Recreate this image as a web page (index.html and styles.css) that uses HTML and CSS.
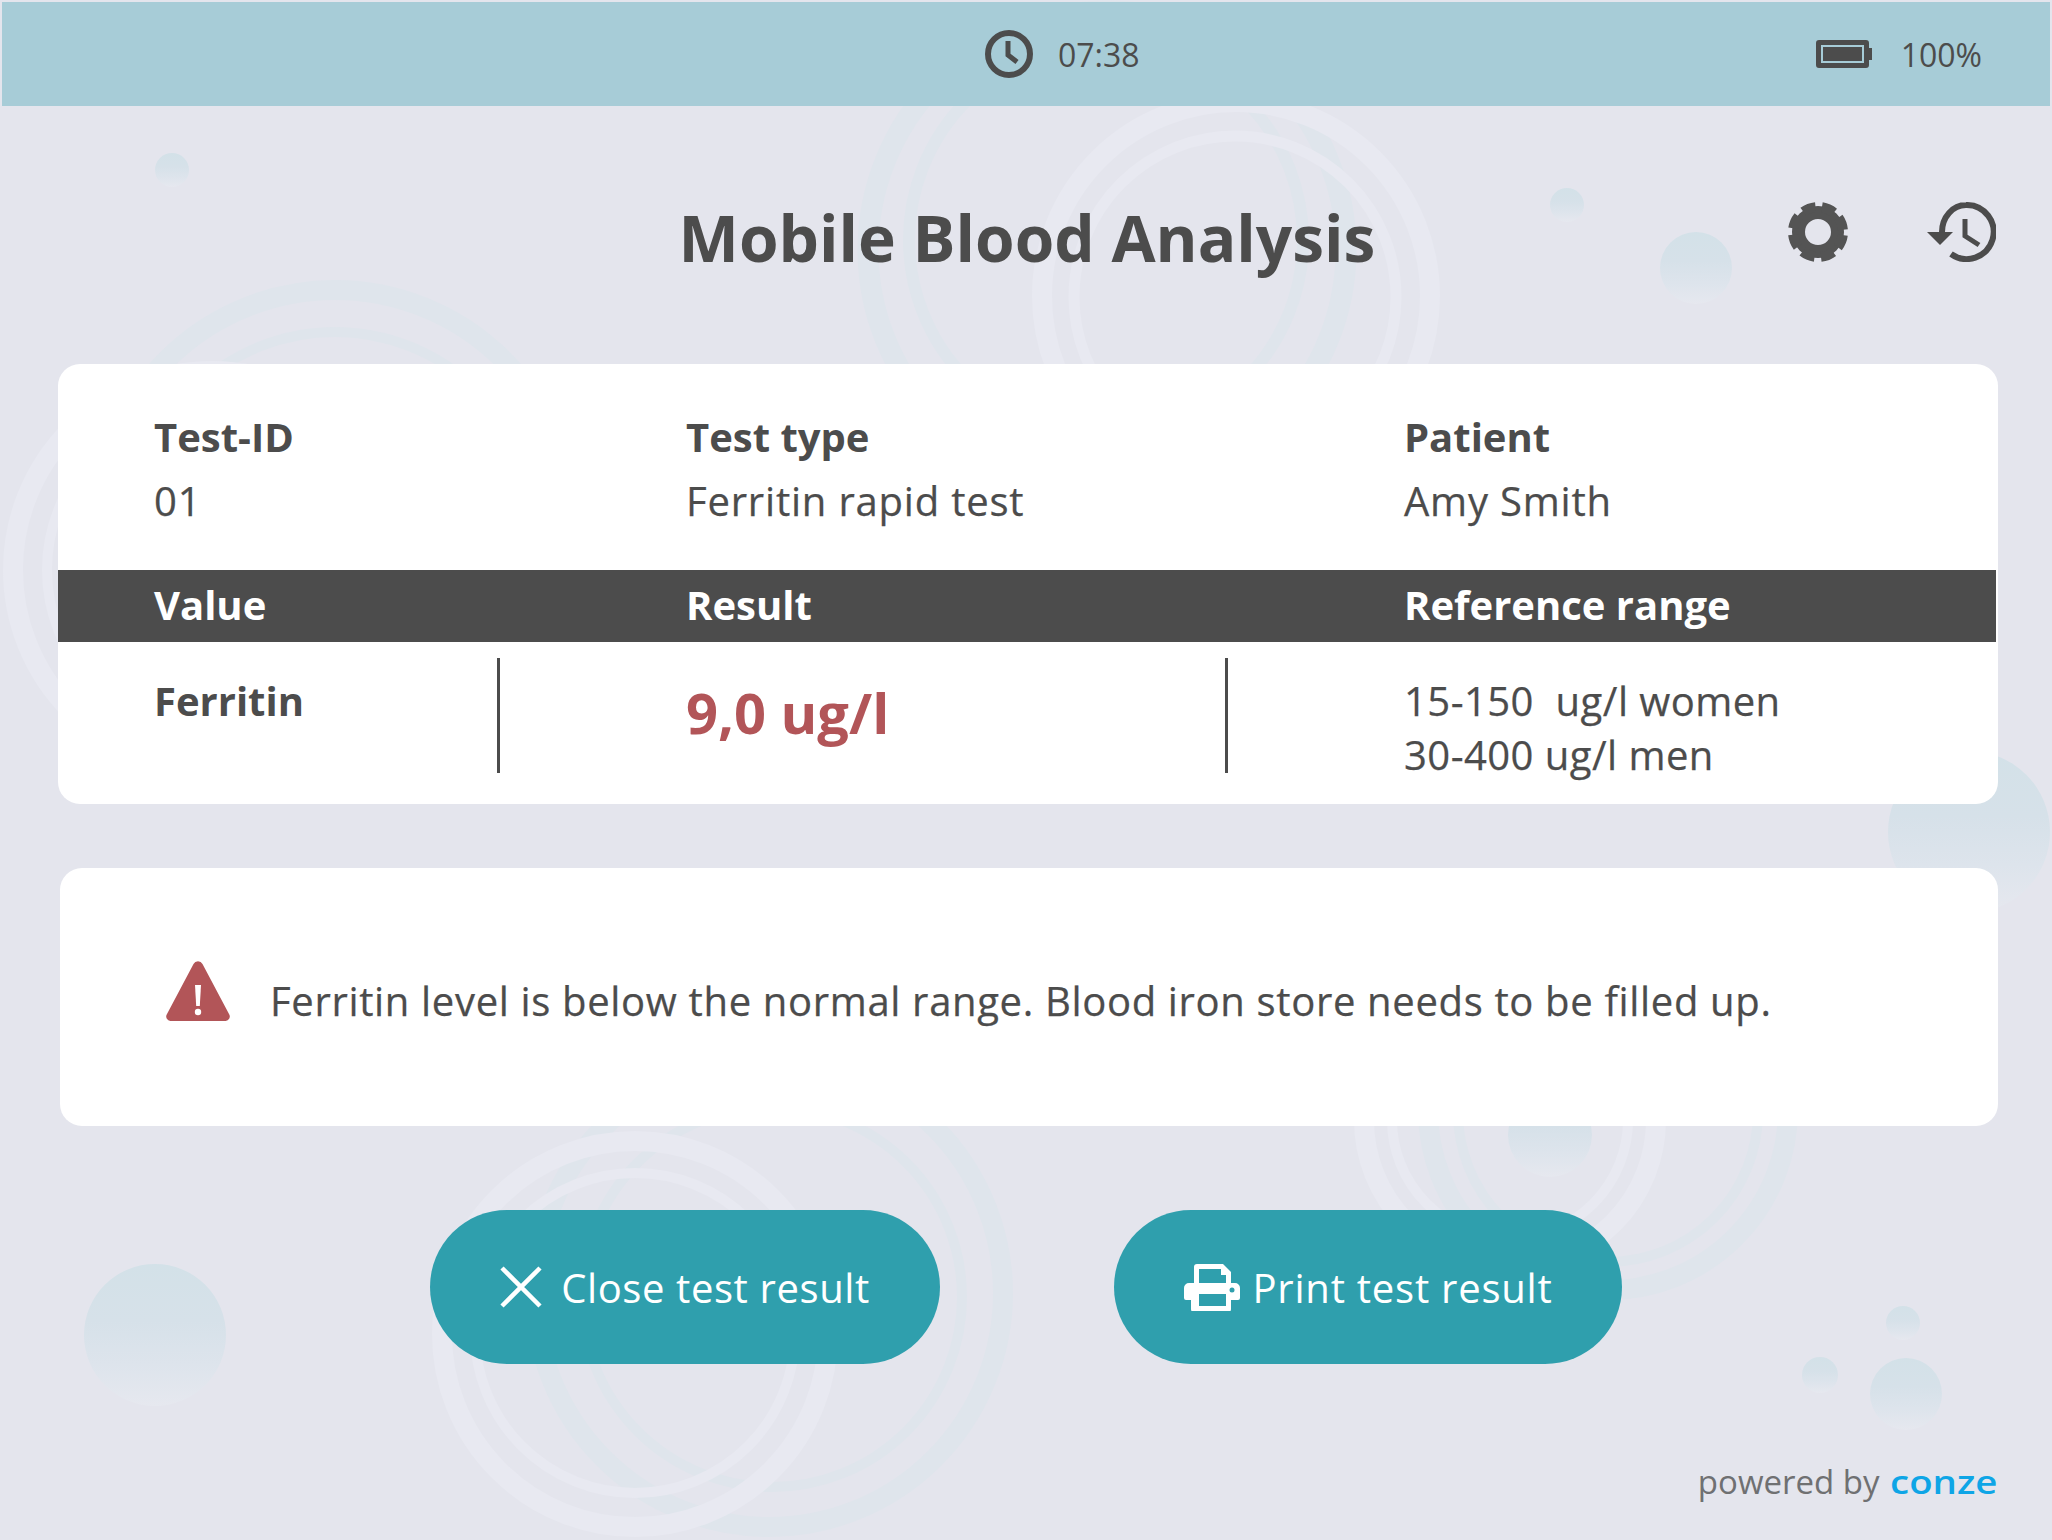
FILE: index.html
```html
<!DOCTYPE html>
<html lang="en">
<head>
  <meta charset="UTF-8">
  <meta name="viewport" content="width=device-width, initial-scale=1.0">
  <title>Mobile Blood Analysis</title>
  <link rel="stylesheet" href="styles.css">
</head>
<body>
  <div class="app">
    <!-- decorative rings and bubbles -->
    <svg class="backdrop" width="2052" height="1540" viewBox="0 0 2052 1540" aria-hidden="true">
      <defs>
        <linearGradient id="bubble" x1="0" y1="0" x2="0" y2="1">
          <stop offset="0" stop-color="#d3e1e8"/>
          <stop offset="0.4" stop-color="#d6e1e9"/>
          <stop offset="0.7" stop-color="#dde4ec"/>
          <stop offset="1" stop-color="#e6e8ef"/>
        </linearGradient>
      </defs>
      <g class="ring-blue">
        <circle cx="1107" cy="250" r="239" stroke-width="21"/>
        <circle cx="1106" cy="240" r="197" stroke-width="12"/>
        <circle cx="335" cy="528" r="238" stroke-width="20"/>
        <circle cx="335" cy="534" r="202" stroke-width="10"/>
        <circle cx="769" cy="1293" r="234" stroke-width="20"/>
        <circle cx="772" cy="1297" r="190" stroke-width="10"/>
        <circle cx="1608" cy="1110" r="180" stroke-width="20"/>
        <circle cx="1608" cy="1112" r="150" stroke-width="10"/>
      </g>
      <g class="ring-lavender">
        <circle cx="1236" cy="296" r="194" stroke-width="20"/>
        <circle cx="1235" cy="297" r="161" stroke-width="11"/>
        <circle cx="212" cy="570" r="199" stroke-width="20"/>
        <circle cx="212" cy="570" r="165" stroke-width="10"/>
        <circle cx="635" cy="1334" r="193" stroke-width="20"/>
        <circle cx="635" cy="1333" r="160" stroke-width="10"/>
        <circle cx="1510" cy="1120" r="146" stroke-width="20"/>
        <circle cx="1510" cy="1120" r="118" stroke-width="10"/>
      </g>
      <g fill="url(#bubble)">
        <circle cx="172" cy="170" r="17"/>
        <circle cx="1567" cy="205" r="17"/>
        <circle cx="1696" cy="268" r="36"/>
        <circle cx="1969" cy="832" r="81"/>
        <circle cx="155" cy="1335" r="71"/>
        <circle cx="1550" cy="1135" r="42"/>
        <circle cx="1903" cy="1323" r="17"/>
        <circle cx="1820" cy="1375" r="18"/>
        <circle cx="1906" cy="1394" r="36"/>
      </g>
    </svg>

    <div class="statusbar">
      <div class="status-item">
        <svg width="48" height="48" viewBox="0 0 48 48" fill="none" stroke="#4c4c4c">
          <circle cx="24" cy="24" r="21" stroke-width="6"/>
          <path d="M23 11v14l9 7" stroke-width="5"/>
        </svg>
        <span>07:38</span>
      </div>
      <div class="status-item status-battery">
        <svg width="56" height="28" viewBox="0 0 56 28">
          <path fill="#4c4c4c" fill-rule="evenodd" d="M3 0h47a3 3 0 0 1 3 3v5h3v12h-3v5a3 3 0 0 1-3 3H3a3 3 0 0 1-3-3V3a3 3 0 0 1 3-3zM5 5v18h43V5z"/>
          <rect x="7" y="7" width="39" height="14" fill="#4c4c4c"/>
        </svg>
        <span>100%</span>
      </div>
    </div>

    <header class="header">
      <div></div>
      <h1>Mobile Blood Analysis</h1>
      <div class="tools">
        <svg width="60" height="60" viewBox="0 0 60 60" fill="none" stroke="#545454">
          <circle cx="30" cy="30" r="19.500" stroke-width="13"/>
          <circle cx="30" cy="30" r="25" stroke-width="10" stroke-dasharray="13 6.635" stroke-dashoffset="-3.300"/>
        </svg>
        <svg width="69" height="60" viewBox="0 0 69 60" fill="none" stroke="#4c4c4c">
          <path d="M15 30A24 27 0 0 1 39 3a27 27 0 1 1-15 49" stroke-width="6"/>
          <path d="M0 30h26L13 43z" fill="#4c4c4c" stroke="none"/>
          <path d="M38 17v17l14 9" stroke-width="5"/>
        </svg>
      </div>
    </header>

    <section class="card">
      <div class="row info-row">
        <div>
          <div class="label">Test-ID</div>
          <div class="value">01</div>
        </div>
        <div>
          <div class="label">Test type</div>
          <div class="value">Ferritin rapid test</div>
        </div>
        <div>
          <div class="label">Patient</div>
          <div class="value">Amy Smith</div>
        </div>
      </div>
      <div class="row table-head">
        <div>Value</div>
        <div>Result</div>
        <div>Reference range</div>
      </div>
      <div class="result-row">
        <div class="cell-value">Ferritin</div>
        <div class="cell-result">9,0 ug/l</div>
        <div class="cell-range">15-150&nbsp; ug/l women<br>30-400 ug/l men</div>
      </div>
    </section>

    <section class="card alert">
      <svg class="alert-icon" width="64" height="60" viewBox="0 0 64 60">
        <path fill="#b25558" d="M27.500 3a5 5 0 0 1 9 0l26.500 50a4.500 4.500 0 0 1-4 7H5a4.500 4.500 0 0 1-4-7z"/>
        <path fill="#fff" d="M29 24h6l-1.200 21h-3.600z"/>
        <circle cx="32" cy="51" r="3.200" fill="#fff"/>
      </svg>
      <p>Ferritin level is below the normal range. Blood iron store needs to be filled up.</p>
    </section>

    <div class="actions">
      <button class="btn btn-close">
        <svg width="42" height="42" viewBox="0 0 42 42" fill="none" stroke="#fff" stroke-width="4.500">
          <path d="M2 2l38 38M40 2L2 40"/>
        </svg>
        Close test result
      </button>
      <button class="btn btn-print">
        <svg width="56" height="47" viewBox="0 0 56 47">
          <path fill="#fff" fill-rule="evenodd" d="M10 3a3 3 0 0 1 3-3h26l8 8v11h4a5 5 0 0 1 5 5v10a2 2 0 0 1-2 2h-7v9a3 3 0 0 1-3 3H10a3 3 0 0 1-3-3v-9H2a2 2 0 0 1-2-2V24a5 5 0 0 1 5-5h5zM15 5v14h27V11h-5V5zM15 30v12h27V30z"/>
          <circle cx="48" cy="26" r="2.500" fill="#2f9fad"/>
        </svg>
        Print test result
      </button>
    </div>

    <footer class="footer">
      <span>powered by</span>
      <span class="brand">conze</span>
    </footer>
  </div>
</body>
</html>
```

FILE: styles.css
```css
* {
  box-sizing: border-box;
}
body {
  margin: 0;
  font-family: "Open Sans", sans-serif;
  color: #4c4c4c;
}
.app {
  position: relative;
  display: flex;
  flex-direction: column;
  width: 2052px;
  height: 1540px;
  overflow: hidden;
  background-color: #e4e5ed;
  font-size: 40px;
}
.backdrop {
  position: absolute;
  top: 0;
  left: 0;
}
.ring-blue circle {
  fill: none;
  stroke: #dfe5ec;
}
.ring-lavender circle {
  fill: none;
  stroke: #e8e9f1;
}
.statusbar,
.header,
.card,
.actions,
.footer {
  position: relative;
}

.statusbar {
  display: flex;
  align-items: center;
  height: 104px;
  margin: 2px 2px 0;
  padding: 0 68px 0 983px;
  background-color: #a7ccd7;
  font-size: 32px;
}
.status-item {
  display: flex;
  align-items: center;
  gap: 25px;
}
.status-battery {
  gap: 29px;
  margin-left: auto;
}

.header {
  display: grid;
  grid-template-columns: 1fr auto 1fr;
  align-items: center;
  height: 258px;
  padding: 4px 56px 0 58px;
}
.header h1 {
  margin: 0;
  font-size: 64px;
  font-weight: 700;
}
.tools {
  display: flex;
  justify-content: flex-end;
  gap: 79px;
  padding-bottom: 10px;
}

.card {
  width: 1940px;
  margin-left: 58px;
  border-radius: 22px;
  background-color: #fff;
}
.row {
  display: grid;
  grid-template-columns: 532px 718px 1fr;
  padding-left: 96px;
}
.info-row {
  height: 206px;
  padding-top: 41px;
  line-height: 64px;
}
.label {
  font-weight: 700;
}
.value {
  letter-spacing: 0.8px;
  -webkit-text-stroke: 0.25px #4c4c4c;
}
.table-head {
  align-items: center;
  height: 72px;
  margin-right: 2px;
  padding-bottom: 3px;
  background-color: #4c4c4c;
  color: #fff;
  font-weight: 700;
}
.result-row {
  display: flex;
  height: 162px;
  padding: 16px 0 0 96px;
}
.cell-value {
  width: 346px;
  height: 115px;
  padding-top: 16px;
  border-right: 3px solid #4c4c4c;
  line-height: 54px;
  font-weight: 700;
}
.cell-result {
  width: 728px;
  height: 115px;
  padding: 17px 0 0 186px;
  border-right: 3px solid #4c4c4c;
  color: #b25558;
  font-size: 56px;
  font-weight: 700;
  line-height: 74px;
}
.cell-range {
  padding: 16px 0 0 176px;
  line-height: 54px;
  letter-spacing: 0.45px;
  -webkit-text-stroke: 0.25px #4c4c4c;
}

.alert {
  display: flex;
  align-items: center;
  gap: 40px;
  width: 1938px;
  height: 258px;
  margin: 64px 0 0 60px;
  padding-left: 106px;
}
.alert-icon {
  margin-top: -12px;
}
.alert p {
  margin: 7px 0 0;
  letter-spacing: 0.66px;
  -webkit-text-stroke: 0.25px #4c4c4c;
}

.actions {
  display: flex;
  gap: 174px;
  margin-top: 84px;
  padding-left: 430px;
}
.btn {
  display: flex;
  align-items: center;
  justify-content: center;
  height: 154px;
  padding: 0;
  border: none;
  border-radius: 77px;
  background-color: #2f9fad;
  color: #fff;
  font-family: inherit;
  font-size: 40px;
}
.btn-close {
  gap: 19px;
  width: 510px;
  letter-spacing: 0.6px;
}
.btn-print {
  gap: 13px;
  width: 508px;
  letter-spacing: 0.77px;
}

.footer {
  display: flex;
  align-items: baseline;
  justify-content: flex-end;
  margin-top: auto;
  padding: 0 55px 36px 0;
  color: #6f7072;
  font-size: 33px;
}
.brand {
  display: inline-block;
  margin-left: 28px;
  color: #0ea5e6;
  font-size: 32px;
  font-weight: 600;
  transform: scaleX(1.2);
  transform-origin: right;
}
```
